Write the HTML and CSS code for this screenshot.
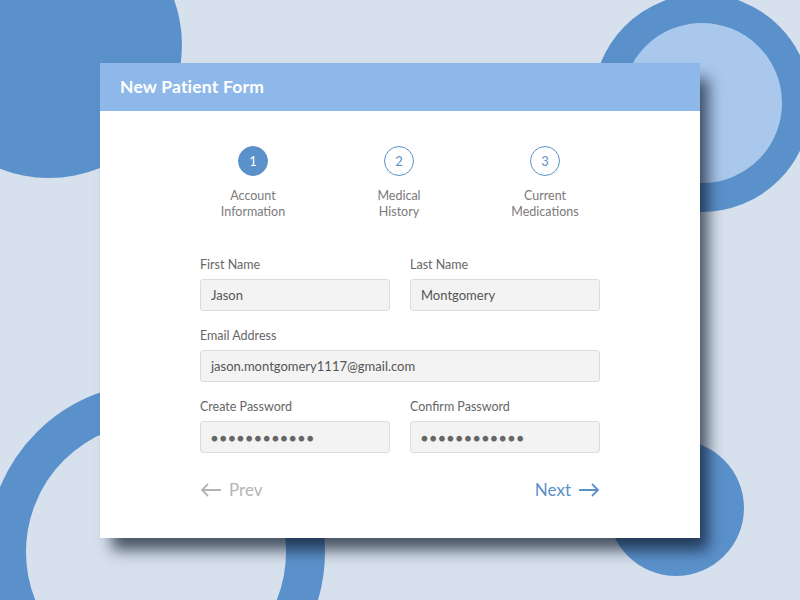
FILE: index.html
```html
<!DOCTYPE html>
<html>
  <head>
    <title>New Patient Form</title>
    <link rel="stylesheet" href="styles.css">
  </head>
  <body>
    <div class="backdrop">
      <div class="blob blob-tl"></div>
      <div class="blob ring-tr"></div>
      <div class="blob ring-bl"></div>
      <div class="blob blob-br"></div>
    </div>

    <div class="page">
      <div class="card">
        <div class="card-header">
          <h1>New Patient Form</h1>
        </div>

        <div class="card-body">
          <div class="steps">
            <div class="step active">
              <span class="step-num">1</span>
              <span class="step-label">Account<br>Information</span>
            </div>
            <div class="step">
              <span class="step-num">2</span>
              <span class="step-label">Medical<br>History</span>
            </div>
            <div class="step">
              <span class="step-num">3</span>
              <span class="step-label">Current<br>Medications</span>
            </div>
          </div>

          <form class="form">
            <div class="field">
              <label>First Name</label>
              <div class="input">Jason</div>
            </div>
            <div class="field">
              <label>Last Name</label>
              <div class="input">Montgomery</div>
            </div>
            <div class="field wide">
              <label>Email Address</label>
              <div class="input">jason.montgomery1117@gmail.com</div>
            </div>
            <div class="field">
              <label>Create Password</label>
              <div class="input dots">&#9679;&#9679;&#9679;&#9679;&#9679;&#9679;&#9679;&#9679;&#9679;&#9679;&#9679;&#9679;</div>
            </div>
            <div class="field">
              <label>Confirm Password</label>
              <div class="input dots">&#9679;&#9679;&#9679;&#9679;&#9679;&#9679;&#9679;&#9679;&#9679;&#9679;&#9679;&#9679;</div>
            </div>
          </form>

          <div class="nav">
            <a class="nav-link prev">
              <svg width="22" height="14" viewBox="0 0 22 14"><path d="M21 7H2M8 1L2 7l6 6" fill="none" stroke="currentColor" stroke-width="1.8"/></svg>
              Prev
            </a>
            <a class="nav-link next">
              Next
              <svg width="22" height="14" viewBox="0 0 22 14"><path d="M1 7h19M14 1l6 6-6 6" fill="none" stroke="currentColor" stroke-width="1.8"/></svg>
            </a>
          </div>
        </div>
      </div>
    </div>
  </body>
</html>
```

FILE: styles.css
```css
* {
  margin: 0;
  padding: 0;
  box-sizing: border-box;
}

body {
  width: 800px;
  height: 600px;
  overflow: hidden;
  background-color: #d7e1ed;
  font-family: "Lato", "Open Sans", sans-serif;
  position: relative;
}

/* Decorative circles */
.backdrop {
  position: absolute;
  inset: 0;
  overflow: hidden;
}

.blob {
  position: absolute;
  border-radius: 50%;
  background-color: #5b91cb;
}

.blob-tl {
  left: -84px;
  top: -88px;
  width: 266px;
  height: 266px;
}

.ring-tr {
  left: 593px;
  top: -6px;
  width: 218px;
  height: 218px;
  border: 29px solid #5b91cb;
  background-color: #a9c8eb;
}

.ring-bl {
  left: -13px;
  top: 383px;
  width: 338px;
  height: 338px;
  border: 39px solid #5b91cb;
  background-color: #d7e1ed;
}

.blob-br {
  left: 608px;
  top: 440px;
  width: 136px;
  height: 136px;
}

/* Card */
.page {
  position: relative;
  display: flex;
  justify-content: center;
  padding-top: 63px;
}

.card {
  width: 600px;
  height: 475px;
  background-color: #fff;
  box-shadow: 10px 14px 14px -2px rgba(10, 22, 40, 0.7);
}

.card-header {
  height: 48px;
  background-color: #8fb8ea;
  padding: 0 20px 2px;
  display: flex;
  align-items: center;
}

.card-header h1 {
  color: #fff;
  font-size: 17.5px;
  font-weight: 700;
  letter-spacing: 0.2px;
}

.card-body {
  padding: 35px 100px 0;
}

/* Steps */
.steps {
  display: grid;
  grid-template-columns: repeat(3, 146px);
  justify-content: center;
  margin-left: -2px;
}

.step {
  display: flex;
  flex-direction: column;
  align-items: center;
  gap: 12px;
}

.step-num {
  width: 30px;
  height: 30px;
  border-radius: 50%;
  border: 1px solid #5b91cb;
  color: #5b91cb;
  font-size: 13px;
  display: flex;
  align-items: center;
  justify-content: center;
}

.step.active .step-num {
  background-color: #5b91cb;
  color: #fff;
}

.step-label {
  color: #7a7a7a;
  font-size: 12.5px;
  line-height: 16px;
  text-align: center;
}

/* Form */
.form {
  display: grid;
  grid-template-columns: 190px 190px;
  column-gap: 20px;
  row-gap: 17px;
  margin-top: 37px;
}

.field {
  display: flex;
  flex-direction: column;
  gap: 6px;
}

.field.wide {
  grid-column: 1 / span 2;
}

.field label {
  color: #666;
  font-size: 12.5px;
  line-height: 16px;
}

.input {
  height: 32px;
  padding: 0 10px;
  background-color: #f3f3f3;
  border: 1px solid #dcdcdc;
  border-radius: 3px;
  color: #555;
  font-size: 13px;
  display: flex;
  align-items: center;
}

.input.dots {
  font-size: 11.5px;
  letter-spacing: 1.8px;
  color: #666;
}

/* Prev / Next */
.nav {
  display: flex;
  justify-content: space-between;
  margin-top: 26px;
}

.nav-link {
  display: flex;
  align-items: center;
  gap: 7px;
  font-size: 17px;
  line-height: 22px;
  cursor: pointer;
}

.prev {
  color: #b4b4b4;
}

.next {
  color: #5b91cb;
}
```
